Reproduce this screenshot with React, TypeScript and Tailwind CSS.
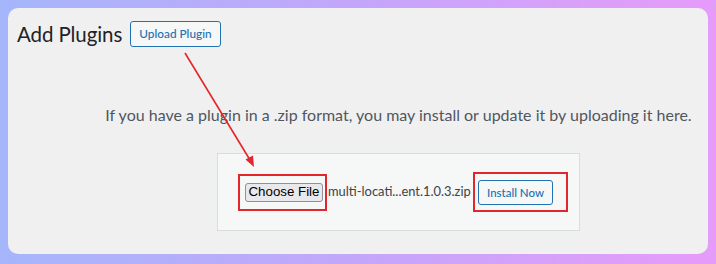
import React from 'react';

const sans = "font-['Lato','Roboto',sans-serif]";

function AnnotationArrow() {
  return (
    <svg
      className="absolute inset-0 pointer-events-none"
      width="716"
      height="264"
      viewBox="0 0 716 264"
    >
      <line x1="185" y1="53" x2="250" y2="160" stroke="#e3262b" strokeWidth="1.6" />
      <polygon points="254,167 245.5,159.5 253,155.5" fill="#e3262b" />
    </svg>
  );
}

export default function App() {
  return (
    <div className="relative w-[716px] h-[264px] bg-gradient-to-r from-[#a5b6fb] via-[#c3a6fa] to-[#e69bf9] pt-2 px-2 pb-[10px]">
      <div className={`flex flex-col h-full rounded-[10px] bg-[#f0f0f1] pt-[13px] ${sans}`}>
        <div className="flex items-center h-[26px] pl-[9px]">
          <h1 className="w-[104px] text-[20.5px] leading-[26px] tracking-[-0.1px] text-[#1d2327] font-normal whitespace-nowrap">
            Add Plugins
          </h1>
          <button className="ml-[9px] h-[26px] w-[91px] rounded-[3px] border border-[#2271b1] bg-[#f6f7f7] text-[11.8px] font-medium text-[#2271b1] whitespace-nowrap">
            Upload Plugin
          </button>
        </div>

        <div className="ml-[81px] flex flex-col items-center">
          <p className="mt-[56px] whitespace-nowrap text-[16px] leading-[24px] text-[#50575e]">
            If you have a plugin in a .zip format, you may install or update it by uploading it here.
          </p>

          <div className="mt-[26px] flex items-center w-[363px] h-[78px] border border-[#dcdcde] bg-[#f6f7f7] pl-[20px]">
            <div className="flex shrink-0 w-[89px] h-[37px] border-2 border-[#e3262b] pl-[5px] pt-[7px]">
              <span className="flex items-center justify-center w-[78px] h-[19px] rounded-[3px] border border-[#8f8f9d] bg-[#e9e9ed] font-['Liberation_Sans',Arial,sans-serif] text-[13.3px] text-black">
                Choose File
              </span>
            </div>
            <span className="ml-px w-[133px] shrink-0 whitespace-nowrap text-[12.9px] text-[#3c434a]">
              multi-locati...ent.1.0.3.zip
            </span>
            <div className="ml-[12px] flex shrink-0 w-[95px] h-[40px] border-2 border-[#e3262b] pl-[3px] pt-[6px]">
              <button className="w-[75px] h-[25px] rounded-[3px] border border-[#2271b1] bg-[#f6f7f7] text-[11.5px] font-medium text-[#2271b1] whitespace-nowrap">
                Install Now
              </button>
            </div>
          </div>
        </div>
      </div>
      <AnnotationArrow />
    </div>
  );
}
